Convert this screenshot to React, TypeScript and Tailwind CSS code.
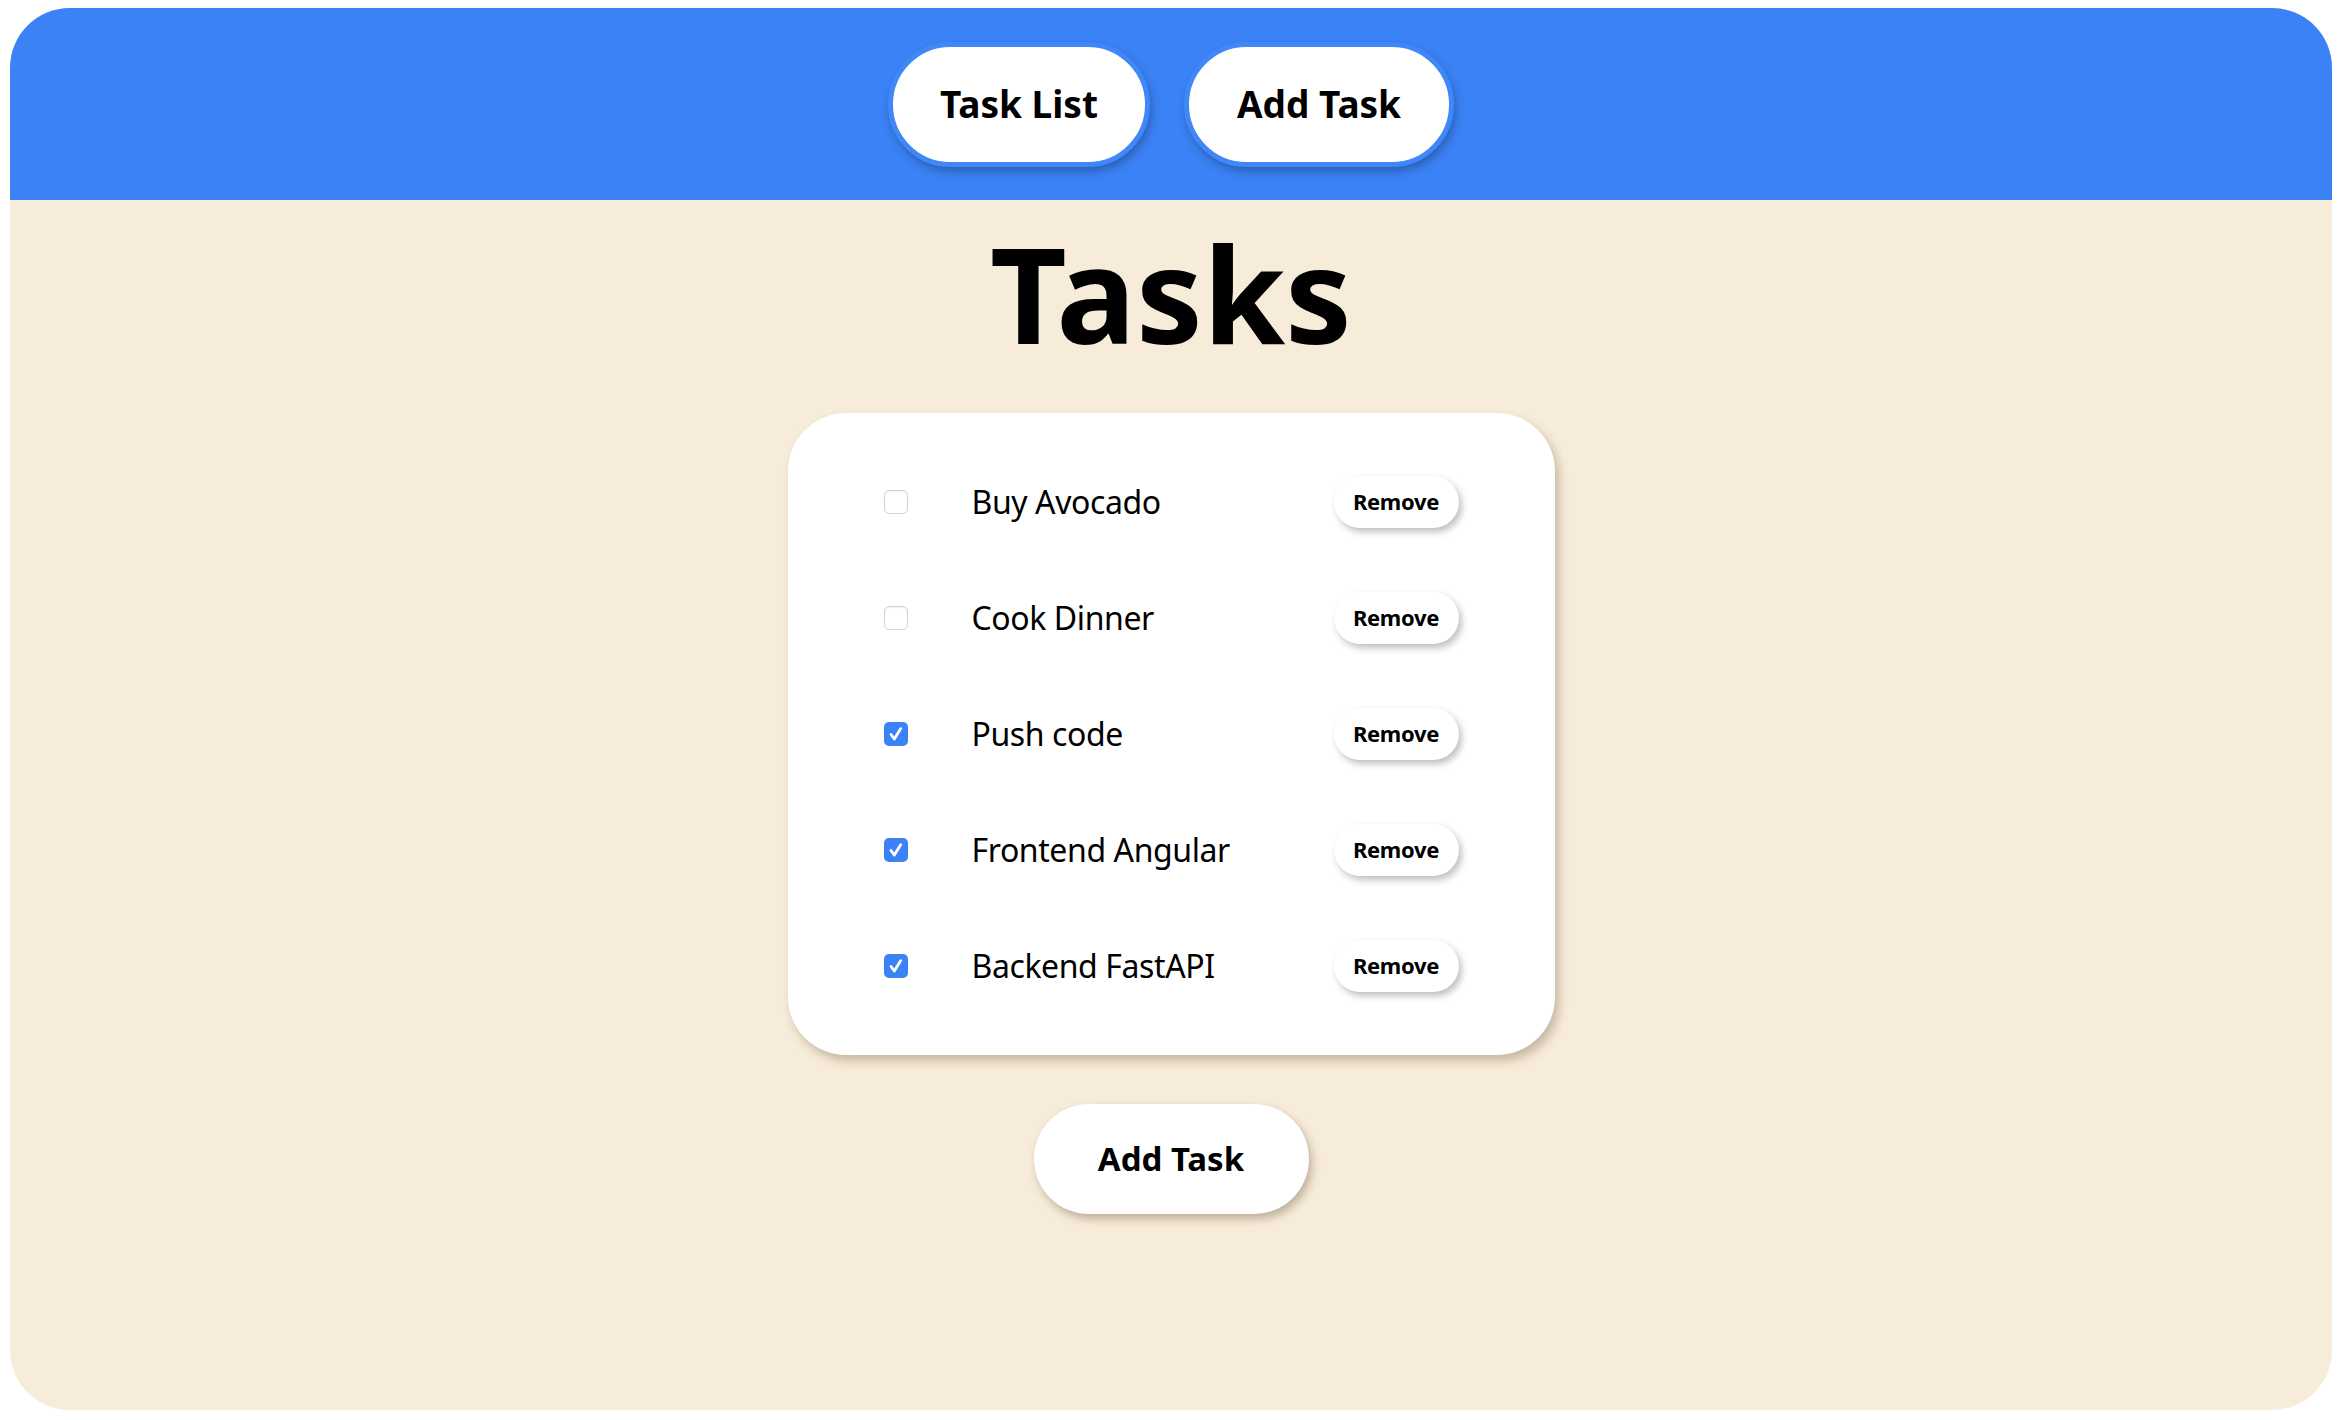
import React from "react";

const tasks = [
  { name: "Buy Avocado", done: false },
  { name: "Cook Dinner", done: false },
  { name: "Push code", done: true },
  { name: "Frontend Angular", done: true },
  { name: "Backend FastAPI", done: true },
];

function Check({ done }: { done: boolean }) {
  if (done) {
    return (
      <span className="flex h-[24px] w-[24px] shrink-0 items-center justify-center rounded-[5px] bg-[#3b82f6]">
        <svg width="20" height="20" viewBox="0 0 20 20" fill="none">
          <path d="M5 10.5 L8.3 15 L14.8 4.6" stroke="white" strokeWidth="2.8" strokeLinecap="round" strokeLinejoin="round" />
        </svg>
      </span>
    );
  }
  return <span className="block h-[24px] w-[24px] shrink-0 rounded-[5px] border border-[#d2d2d2] bg-white shadow-[inset_0_1px_2px_rgba(0,0,0,0.06)]" />;
}

export default function App() {
  return (
    <div className="h-[1420px] w-full bg-white pt-[8px] pb-[10px] pl-[10px] pr-[8px] font-['Noto_Sans',sans-serif] text-black">
      <div className="flex h-full flex-col overflow-hidden rounded-[60px] bg-[#f7ebd9]">
        <header className="flex h-[192px] shrink-0 items-center justify-center gap-[34px] bg-[#3b82f6]">
          <button className="h-[125px] rounded-full border-[5px] border-[#4088f8] bg-white px-[47px] text-[37px] font-bold shadow-[2px_5px_8px_rgba(0,0,0,0.25)]">
            Task List
          </button>
          <button className="h-[125px] rounded-full border-[5px] border-[#4088f8] bg-white px-[48px] text-[37px] font-bold shadow-[2px_5px_8px_rgba(0,0,0,0.25)]">
            Add Task
          </button>
        </header>
        <main className="flex flex-col items-center">
          <h1 className="mt-[13px] text-[133px] font-bold leading-[1.2]">Tasks</h1>
          <div className="mt-[40px] w-[767px] rounded-[58px] bg-white px-[96px] py-[31px] shadow-[4px_6px_10px_rgba(90,70,40,0.3)]">
            {tasks.map((t) => (
              <div key={t.name} className="flex h-[116px] items-center">
                <Check done={t.done} />
                <span className="ml-[64px] text-[32px] leading-none tracking-[-0.4px]">{t.name}</span>
                <button className="ml-auto h-[52px] w-[125px] rounded-full bg-white text-[22px] font-bold tracking-[-0.3px] shadow-[3px_4px_7px_rgba(0,0,0,0.25)]">
                  Remove
                </button>
              </div>
            ))}
          </div>
          <button className="mt-[49px] h-[110px] w-[275px] rounded-full bg-white text-[33px] font-bold shadow-[3px_5px_8px_rgba(90,70,40,0.35)]">
            Add Task
          </button>
        </main>
      </div>
    </div>
  );
}
